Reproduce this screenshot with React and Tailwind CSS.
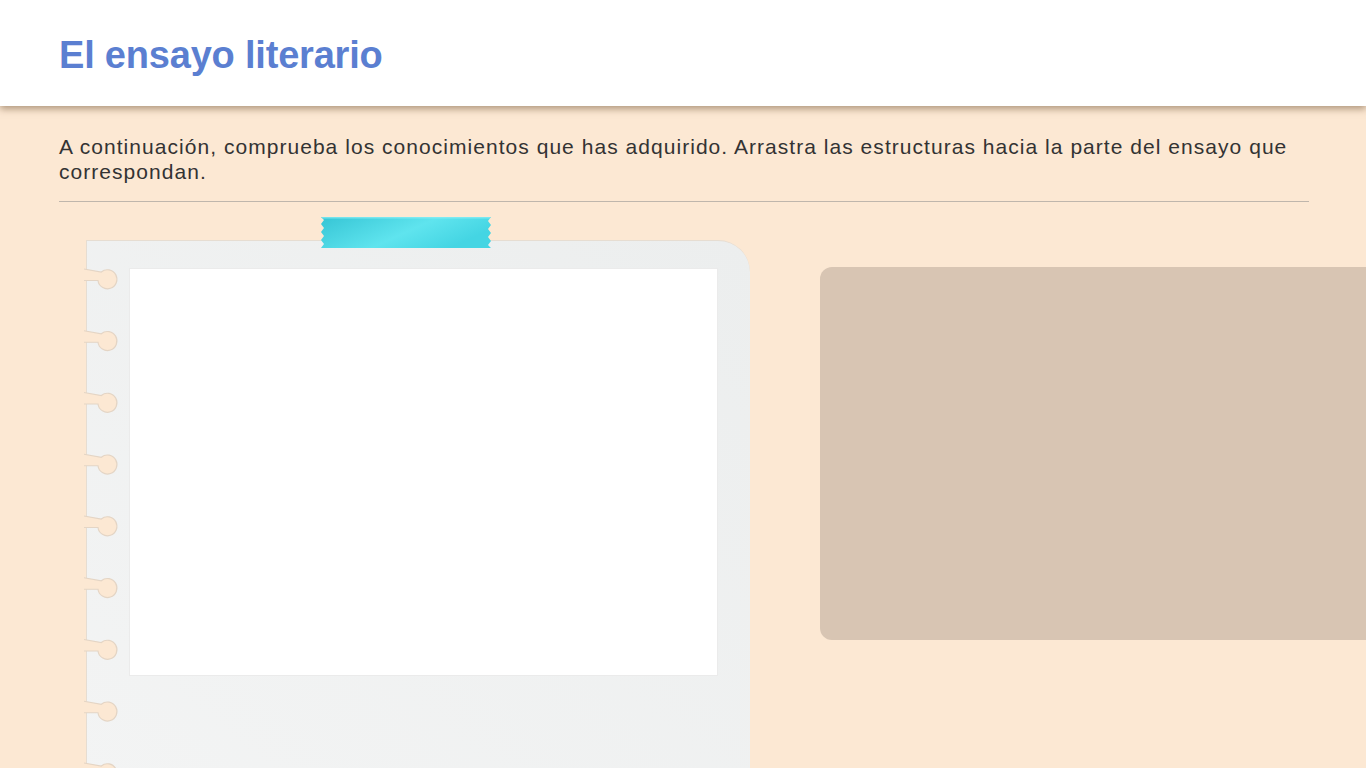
import React from "react";

const HOLES = [0, 1, 2, 3, 4, 5, 6, 7, 8];

const Hole = ({ c }) => {
  const top = `M -2 ${c - 10} L 15.3 ${c - 7} A 9.5 9.5 0 1 1 12 ${c + 1.5} L -2 ${c + 1.5}`;
  return (
    <g>
      <path d={`${top} Z`} fill="#fce8d3" />
      <path d={top} fill="none" stroke="#e4d5c5" strokeWidth="1.2" />
    </g>
  );
};

const Tape = () => (
  <svg width="172" height="31" viewBox="0 0 172 31" className="absolute left-[233px] top-[-24px]">
    <defs>
      <linearGradient id="tape" x1="0" y1="0" x2="1" y2="0.4">
        <stop offset="0" stopColor="#36c5d5" />
        <stop offset="0.6" stopColor="#5fe4ee" />
        <stop offset="1" stopColor="#44d5e3" />
      </linearGradient>
    </defs>
    <polygon
      points="1,0 171,0 168,4 171,8 168,12 171,16 168,20 171,24 168,28 171,31 1,31 4,27 1,23 4,19 1,15 4,11 1,7 4,3"
      fill="url(#tape)"
    />
    <rect x="2" y="0" width="168" height="1.5" fill="#8beef5" opacity="0.7" />
  </svg>
);

const Notebook = () => (
  <div className="relative ml-[27px] mt-[38px] w-[664px] h-[560px] shrink-0 rounded-tr-[32px] border-l border-t border-[#e6ddd2] bg-gradient-to-bl from-[#eceeee] to-[#f3f4f4] pt-[27px] pl-[42px]">
    <div className="w-[589px] h-[408px] bg-white border border-[#ebebeb]" />
    <svg width="40" height="560" className="absolute left-[-1px] top-[-1px] overflow-visible">
      {HOLES.map(i => (
        <Hole key={i} c={39 + i * 61.75} />
      ))}
    </svg>
    <Tape />
  </div>
);

export default function App() {
  return (
    <div className="h-screen w-full overflow-hidden bg-[#fce8d3] font-['Liberation_Sans',Arial,sans-serif]">
      <header className="relative z-10 h-[106px] bg-white px-[59px] pt-[36px] shadow-[0_3px_7px_rgba(100,70,40,0.5)]">
        <h1 className="text-[38px] leading-[38px] font-bold text-[#5b7fd1] tracking-[-0.2px]">
          El ensayo literario
        </h1>
      </header>
      <main className="pl-[59px] pr-[57px]">
        <p className="mt-[28px] text-[21px] leading-[25px] tracking-[1.04px] text-[#333333]">
          A continuación, comprueba los conocimientos que has adquirido. Arrastra las estructuras hacia la parte del ensayo que correspondan.
        </p>
        <div className="mt-[17px] border-t border-[#bfb6ac]" />
        <div className="flex items-start">
          <Notebook />
          <div className="ml-[70px] mt-[65px] w-[600px] h-[373px] shrink-0 rounded-[12px] bg-[#d8c5b3]" />
        </div>
      </main>
    </div>
  );
}
